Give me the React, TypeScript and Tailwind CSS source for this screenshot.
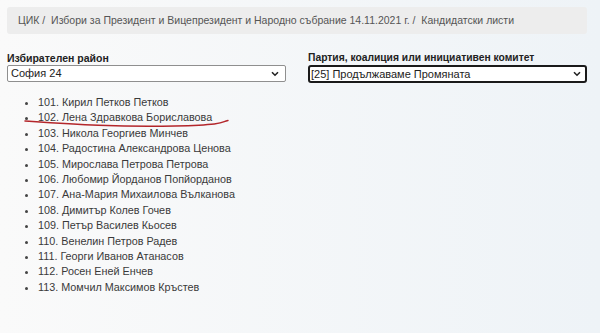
import React from "react";

const names = [
  "101. Кирил Петков Петков",
  "102. Лена Здравкова Бориславова",
  "103. Никола Георгиев Минчев",
  "104. Радостина Александрова Ценова",
  "105. Мирослава Петрова Петрова",
  "106. Любомир Йорданов Попйорданов",
  "107. Ана-Мария Михаилова Вълканова",
  "108. Димитър Колев Гочев",
  "109. Петър Василев Кьосев",
  "110. Венелин Петров Радев",
  "111. Георги Иванов Атанасов",
  "112. Росен Еней Енчев",
  "113. Момчил Максимов Кръстев",
];

function Chevron() {
  return (
    <svg width="8" height="6" viewBox="0 0 8 6" className="shrink-0">
      <path d="M1 1.2 L4 4.2 L7 1.2" fill="none" stroke="#222" strokeWidth="1.6" />
    </svg>
  );
}

export default function App() {
  return (
    <div
      className="relative w-[600px] h-[333px] overflow-hidden bg-gradient-to-r from-[#fafafa] to-[#eef3f7] text-[#333]"
      style={{ fontFamily: '"Liberation Sans", Arial, sans-serif' }}
    >
      <div className="pt-[7px] px-[7px]">
        <div className="w-[580px] h-[27px] bg-[#ededed] rounded-[3px] flex items-center pl-[11px] text-[10.5px] text-[#555]">
          <span>ЦИК /&nbsp;&nbsp;Избори за Президент и Вицепрезидент и Народно събрание 14.11.2021 г. /&nbsp;&nbsp;Кандидатски листи</span>
        </div>
        <div className="flex gap-[22px] mt-[17px]">
          <div className="w-[279px]">
            <div className="text-[10.5px] font-bold text-[#222] leading-[14px] h-[14px]">Избирателен район</div>
            <div className="h-[17px] border border-[#8f8f8f] bg-white rounded-[2px] flex items-center justify-between pl-[3px] pr-[6px] text-[11px] text-[#222]">
              <span>София 24</span>
              <Chevron />
            </div>
          </div>
          <div className="w-[279px]">
            <div className="text-[10.3px] font-bold text-[#222] leading-[14px] h-[14px]">Партия, коалиция или инициативен комитет</div>
            <div className="h-[18px] border-2 border-[#1a1a1a] bg-white rounded-[3px] flex items-center justify-between pl-[1px] pr-[4px] text-[11px] text-[#222]">
              <span>[25] Продължаваме Промяната</span>
              <Chevron />
            </div>
          </div>
        </div>
        <ul className="mt-[12px] pl-[31px] list-disc text-[10.8px] leading-[15.4px] text-[#3a3a3a] marker:text-[#444]">
          {names.map((n) => (
            <li key={n}>{n}</li>
          ))}
        </ul>
      </div>
      <svg className="absolute left-0 top-0" width="600" height="333" viewBox="0 0 600 333">
        <path d="M25 121 C 70 124, 120 127.5, 175 126 S 220 122, 228 120.5" fill="none" stroke="#b3262b" strokeWidth="1.5" strokeLinecap="round" />
      </svg>
    </div>
  );
}
